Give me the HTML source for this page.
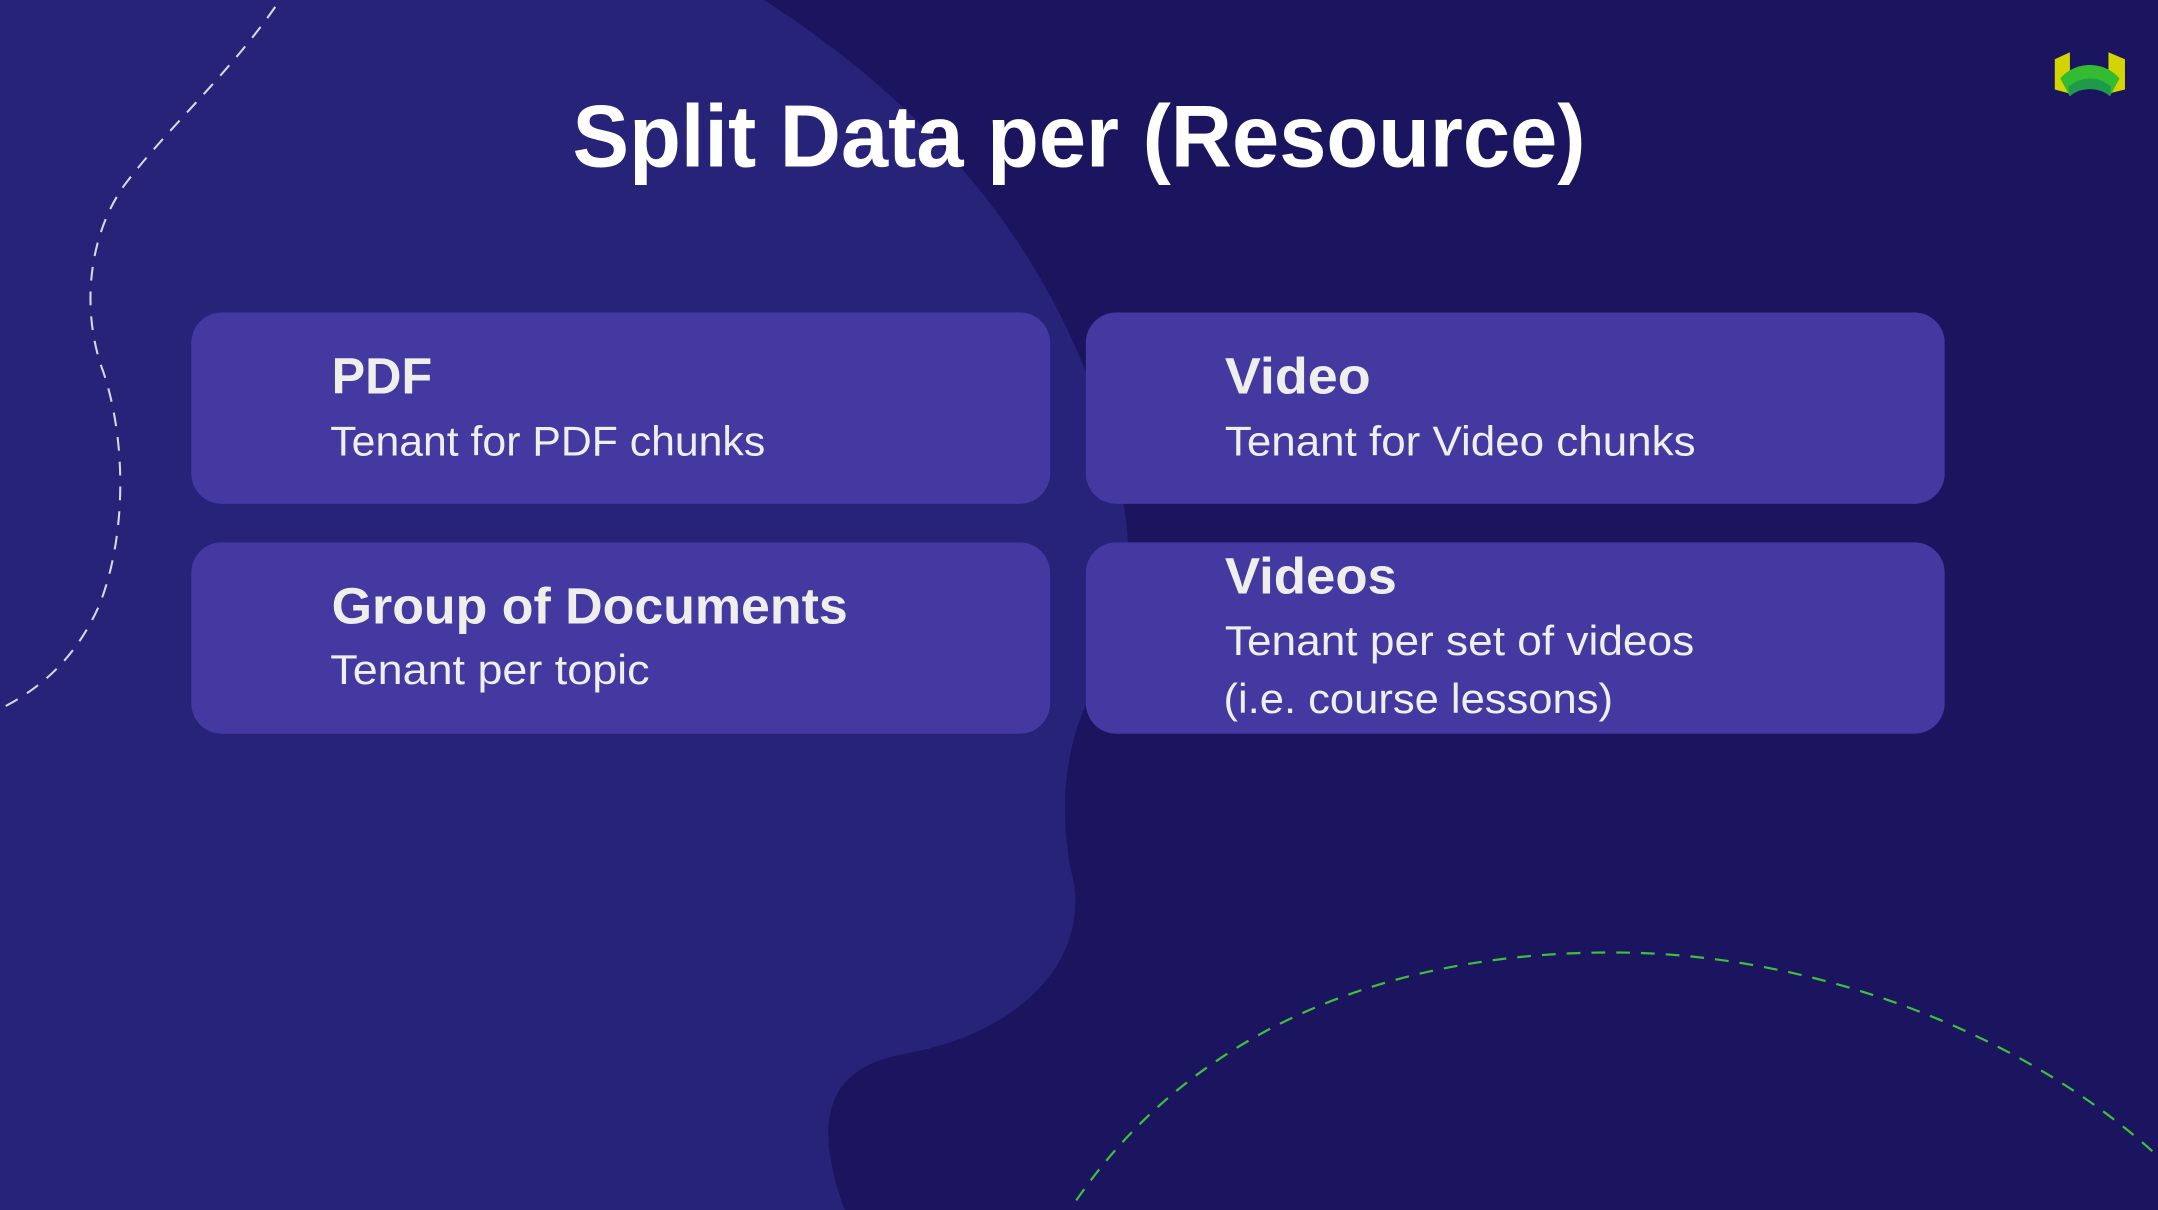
<!DOCTYPE html>
<html><head><meta charset="utf-8"><style>
html,body{margin:0;padding:0;background:#1b1560;overflow:hidden}
svg{display:block}
text{font-family:"Liberation Sans",sans-serif;fill:#eeeeea}
</style></head><body>
<svg width="2158" height="1210" viewBox="0 0 1568 879" preserveAspectRatio="none" xmlns="http://www.w3.org/2000/svg">
<rect width="1568" height="879" fill="#1b1560"/>
<path d="M0 0 L555 0 C680 80 760 180 800 300 C825 380 830 440 795 500 C770 545 770 600 780 640 C790 700 740 750 660 765 C620 772 600 790 602 830 C604 850 610 870 614 879 L0 879 Z" fill="#262379"/>
<path d="M200 5 C165 55 120 95 90 135 C62 175 60 230 75 270 C92 320 92 390 72 440 C55 478 30 500 0 515" fill="none" stroke="#d8d8e8" stroke-width="1.5" stroke-dasharray="10 8"/>
<path d="M782 872 C880 730 1040 690 1180 692 C1320 694 1470 750 1568 840" fill="none" stroke="#3fbf3a" stroke-width="1.6" stroke-dasharray="10 8"/>
<text x="416" y="121" font-size="64" font-weight="bold" textLength="736" lengthAdjust="spacingAndGlyphs" style="fill:#fff">Split Data per (Resource)</text>
<rect x="139" y="227" width="624" height="139" rx="22" fill="#4339a0"/>
<rect x="789" y="227" width="624" height="139" rx="22" fill="#4339a0"/>
<rect x="139" y="394" width="624" height="139" rx="22" fill="#4339a0"/>
<rect x="789" y="394" width="624" height="139" rx="22" fill="#4339a0"/>
<text x="241" y="286" font-size="37" font-weight="bold" textLength="73" lengthAdjust="spacingAndGlyphs">PDF</text>
<text x="240" y="331" font-size="30" textLength="316" lengthAdjust="spacingAndGlyphs">Tenant for PDF chunks</text>
<text x="890" y="286" font-size="37" font-weight="bold" textLength="106" lengthAdjust="spacingAndGlyphs">Video</text>
<text x="890" y="331" font-size="30" textLength="342" lengthAdjust="spacingAndGlyphs">Tenant for Video chunks</text>
<text x="241" y="453" font-size="37" font-weight="bold" textLength="375" lengthAdjust="spacingAndGlyphs">Group of Documents</text>
<text x="240" y="497" font-size="30" textLength="232" lengthAdjust="spacingAndGlyphs">Tenant per topic</text>
<text x="890" y="431" font-size="37" font-weight="bold" textLength="125" lengthAdjust="spacingAndGlyphs">Videos</text>
<text x="890" y="476" font-size="30" textLength="341" lengthAdjust="spacingAndGlyphs">Tenant per set of videos</text>
<text x="889" y="518" font-size="30" textLength="283" lengthAdjust="spacingAndGlyphs">(i.e. course lessons)</text>
<g>
<path d="M1493 43 L1504 38 L1504 68 L1493 65 Z" fill="#d4d400"/>
<path d="M1532 38 L1544 43 L1544 65 L1532 68 Z" fill="#d4d400"/>
<path d="M1497 57 C1508 44 1529 44 1540 57 L1533 70 C1526 59 1511 59 1504 70 Z" fill="#33bb33"/>
<path d="M1503 63 C1512 55 1525 55 1534 63 L1533 70 C1526 63 1511 63 1504 70 Z" fill="#1f9a4a"/>
</g>
</svg>
</body></html>
